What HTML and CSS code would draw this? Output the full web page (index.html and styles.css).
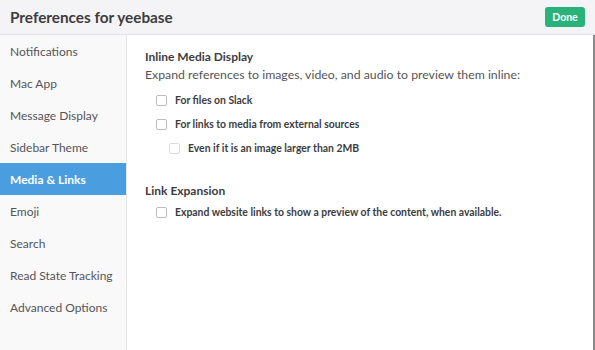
FILE: index.html
```html
<!DOCTYPE html>
<html>
<head>
<meta charset="utf-8">
<link rel="stylesheet" href="styles.css">
</head>
<body>
<div class="dialog">
  <header class="header">
    <h1 class="title">Preferences for yeebase</h1>
    <button class="done">Done</button>
  </header>
  <div class="main">
    <nav class="sidebar">
      <div class="nav-item">Notifications</div>
      <div class="nav-item">Mac App</div>
      <div class="nav-item">Message Display</div>
      <div class="nav-item">Sidebar Theme</div>
      <div class="nav-item active">Media &amp; Links</div>
      <div class="nav-item">Emoji</div>
      <div class="nav-item">Search</div>
      <div class="nav-item">Read State Tracking</div>
      <div class="nav-item">Advanced Options</div>
    </nav>
    <section class="content">
      <h2 class="section-title">Inline Media Display</h2>
      <p class="section-desc">Expand references to images, video, and audio to preview them inline:</p>
      <label class="option"><span class="box"></span>For files on Slack</label>
      <label class="option"><span class="box"></span>For links to media from external sources</label>
      <label class="option nested"><span class="box"></span>Even if it is an image larger than 2MB</label>
      <h2 class="section-title second">Link Expansion</h2>
      <label class="option"><span class="box"></span>Expand website links to show a preview of the content, when available.</label>
    </section>
  </div>
</div>
</body>
</html>
```

FILE: styles.css
```css
* { box-sizing: border-box; }
html, body { margin: 0; padding: 0; }
body {
  width: 595px;
  height: 350px;
  overflow: hidden;
  font-family: Lato, "Open Sans", sans-serif;
  background: #fff;
}
.dialog {
  display: flex;
  flex-direction: column;
  height: 350px;
}
.header {
  height: 35px;
  flex: none;
  background: #f4f4f6;
  border-bottom: 1px solid #e3e3e6;
  display: flex;
  align-items: center;
  justify-content: space-between;
  padding: 0 10px 0 10px;
}
.title {
  margin: 0;
  font-size: 15.3px;
  font-weight: 700;
  color: #3d3c40;
}
.done {
  font-family: Lato, sans-serif;
  font-weight: 700;
  font-size: 10.5px;
  color: #fff;
  background: #2ab27b;
  border: none;
  border-radius: 3px;
  height: 20px;
  width: 40px;
  padding: 0;
  margin-top: -1px;
}
.main {
  flex: 1;
  display: flex;
  border-right: 2px solid #8a8a8a;
}
.sidebar {
  width: 127px;
  flex: none;
  background: #f9f9f9;
  border-right: 1px solid #e6e6e6;
}
.nav-item {
  height: 32px;
  display: flex;
  align-items: center;
  padding-left: 10px;
  font-size: 12px;
  color: #555459;
}
.nav-item.active {
  background: #4a9edf;
  color: #fff;
  font-weight: 700;
}
.content {
  flex: 1;
  padding: 13px 0 0 18px;
}
.section-title {
  margin: 0;
  font-size: 12px;
  font-weight: 700;
  color: #3d3c40;
  line-height: 18px;
}
.section-title.second {
  margin-top: 22px;
}
.section-desc {
  margin: 0 0 4px 0;
  font-size: 12.3px;
  color: #555459;
  line-height: 18px;
}
.option {
  display: flex;
  align-items: center;
  height: 24px;
  padding-left: 11px;
  font-size: 10.4px;
  font-weight: 700;
  color: #3d3c40;
}
.option.nested {
  padding-left: 24px;
}
.box {
  width: 11px;
  height: 11px;
  border: 1px solid #bdbdbd;
  border-radius: 2px;
  background: #fff;
  margin-right: 8px;
  flex: none;
}
.nested .box {
  border-color: #dcdcdc;
}
```
